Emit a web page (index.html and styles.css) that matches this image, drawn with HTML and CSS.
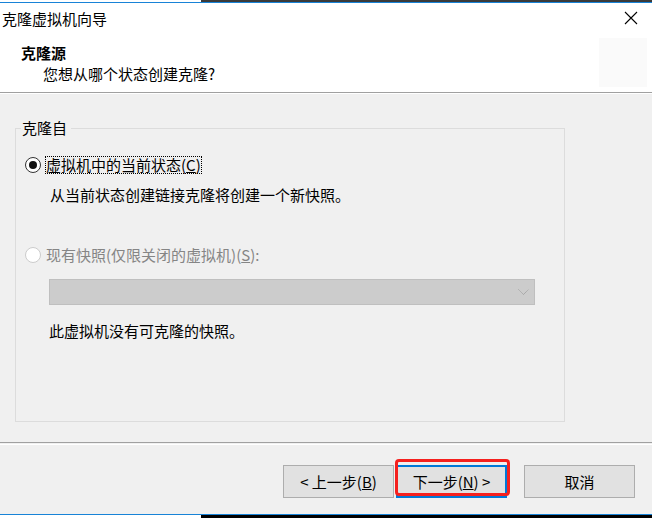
FILE: index.html
```html
<!DOCTYPE html>
<html lang="zh-CN">
<head>
<meta charset="utf-8">
<title>克隆虚拟机向导</title>
<link rel="stylesheet" href="styles.css">
</head>
<body>
<div class="window">
  <div class="top-edge">
    <div class="edge-left"></div>
    <div class="edge-right"></div>
  </div>
  <div class="edge-blue"></div>

  <div class="titlebar">
    <span class="title">克隆虚拟机向导</span>
    <svg class="close" width="14" height="14" viewBox="0 0 14 14">
      <path d="M1 1 L13 13 M13 1 L1 13" stroke="#000" stroke-width="1.1" fill="none"/>
    </svg>
  </div>

  <div class="header">
    <div class="header-text">
      <div class="h-title">克隆源</div>
      <div class="h-sub">您想从哪个状态创建克隆?</div>
    </div>
    <div class="h-logo"></div>
  </div>
  <div class="sep-dark"></div>
  <div class="sep-light"></div>

  <div class="content">
    <div class="group">
      <div class="legend">克隆自</div>
      <div class="radio-row">
        <span class="radio checked"></span>
        <span class="label focus">虚拟机中的当前状态(<u>C</u>)</span>
      </div>
      <div class="desc desc1">从当前状态创建链接克隆将创建一个新快照。</div>
      <div class="radio-row row2">
        <span class="radio disabled"></span>
        <span class="label disabled-text">现有快照(仅限关闭的虚拟机)(<u>S</u>):</span>
      </div>
      <div class="select">
        <svg class="chev" width="11" height="7" viewBox="0 0 11 7">
          <path d="M0.5 0.5 L5.5 5.5 L10.5 0.5" stroke="#9a9a9a" stroke-width="1" fill="none" stroke-dasharray="1 0.6"/>
        </svg>
      </div>
      <div class="desc desc2">此虚拟机没有可克隆的快照。</div>
    </div>
  </div>

  <div class="sep-dark"></div>
  <div class="sep-gap"></div>
  <div class="sep-light"></div>

  <div class="footer">
    <button class="btn">&lt; 上一步(<u>B</u>)</button>
    <button class="btn default">下一步(<u>N</u>) &gt;<span class="mark"></span></button>
    <button class="btn cancel">取消</button>
  </div>

  <div class="edge-blue"></div>
  <div class="bottom-edge">
    <div class="edge-left"></div>
    <div class="edge-black"></div>
  </div>
</div>
</body>
</html>
```

FILE: styles.css
```css
* { box-sizing: border-box; }

html, body {
  margin: 0;
  padding: 0;
  background: #f0f0f0;
}

body {
  font-family: "Noto Sans CJK SC", "Microsoft YaHei", sans-serif;
  font-size: 15px;
  color: #000;
  width: 652px;
  height: 518px;
  overflow: hidden;
}

.window {
  display: flex;
  flex-direction: column;
  width: 652px;
  height: 518px;
}

.top-edge {
  display: flex;
  height: 2px;
}
.top-edge .edge-left { width: 201px; background: #ffffff; }
.top-edge .edge-right { flex: 1; background: #3a3a3a; }

.edge-blue {
  height: 1px;
  background: #1883d7;
}

.titlebar {
  height: 30px;
  background: #fff;
  display: flex;
  align-items: center;
  justify-content: space-between;
  padding: 0 14px 0 2px;
}
.title {
  line-height: 20px;
  position: relative;
  top: 1px;
}
.close { display: block; }

.header {
  height: 59px;
  background: #fff;
  display: flex;
  justify-content: space-between;
  align-items: flex-start;
}
.header-text {
  padding: 10px 0 0 21px;
}
.h-title {
  font-weight: bold;
  line-height: 20px;
}
.h-sub {
  line-height: 20px;
  margin-top: 1px;
  padding-left: 22px;
}
.h-logo {
  width: 48px;
  height: 49px;
  margin: 5px 5px 0 0;
  background: #fafafa;
}

.sep-dark { height: 1px; background: #a0a0a0; }
.sep-light { height: 1px; background: #ffffff; }
.sep-gap { height: 1px; background: #f0f0f0; }

.content {
  height: 348px;
  padding: 34px 0 0 15px;
}

.group {
  position: relative;
  width: 550px;
  height: 294px;
  border: 1px solid #dcdcdc;
  padding: 26px 0 0 9px;
}

.legend {
  position: absolute;
  top: -11px;
  left: 5px;
  padding: 0 4px 0 1px;
  line-height: 20px;
  background: #f0f0f0;
}

.radio-row {
  display: flex;
  align-items: center;
  height: 20px;
}

.radio {
  width: 16px;
  height: 16px;
  border-radius: 50%;
  background: #fff;
  border: 1px solid #333;
  display: flex;
  align-items: center;
  justify-content: center;
  flex: none;
}
.radio.checked::after {
  content: "";
  width: 8px;
  height: 8px;
  border-radius: 50%;
  background: #111;
}
.radio.disabled {
  border-color: #cccccc;
}

.label {
  margin-left: 4px;
  line-height: 16px;
  padding: 0;
  border: 1px solid transparent;
}
.label.focus {
  border: 1px dotted #000;
}
.disabled-text {
  color: #858585;
  margin-left: 5px;
  border: 0;
}

.desc {
  line-height: 20px;
  padding-left: 25px;
}
.desc1 { margin-top: 10px; }

.row2 { margin-top: 40px; }

.select {
  margin: 14px 0 0 24px;
  width: 486px;
  height: 26px;
  background: #cccccc;
  border: 1px solid #bfbfbf;
  display: flex;
  align-items: center;
  justify-content: flex-end;
  padding-right: 5px;
}
.chev { display: block; }

.desc2 {
  margin-top: 16px;
  padding-left: 24px;
}

.footer {
  height: 69px;
  display: flex;
  justify-content: flex-end;
  align-items: flex-start;
  padding: 20px 17px 0 0;
}

.btn {
  position: relative;
  width: 111px;
  height: 33px;
  background: #e1e1e1;
  border: 1px solid #adadad;
  font-family: inherit;
  font-size: 15px;
  color: #000;
  padding: 0;
  line-height: 20px;
  margin: 0;
}
.btn.default {
  margin-left: 2px;
  border-color: #0078d7;
  box-shadow: inset 0 0 0 1px #0078d7;
}
.btn.cancel {
  margin-left: 17px;
}

.mark {
  position: absolute;
  top: -7px;
  left: -2px;
  width: 115px;
  height: 37px;
  border: 3px solid #f5201e;
  border-radius: 4px;
}

.bottom-edge {
  display: flex;
  height: 3px;
}
.bottom-edge .edge-left { width: 201px; background: #ffffff; }
.bottom-edge .edge-black { flex: 1; background: #000; }
```
